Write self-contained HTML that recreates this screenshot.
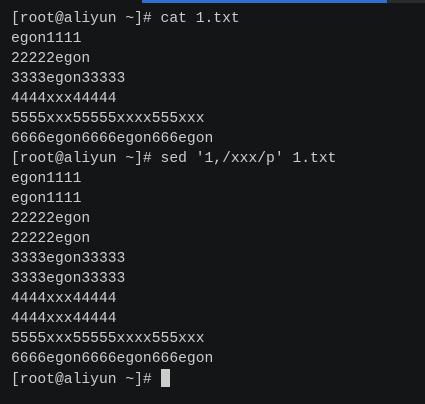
<!DOCTYPE html><html><head><style>
html,body{margin:0;padding:0;}
body{width:425px;height:404px;background:#141516;overflow:hidden;position:relative;}
.bar{position:absolute;top:0;height:3px;}
pre{position:absolute;left:11px;top:9px;margin:0;font-family:"Liberation Mono",monospace;font-size:14.67px;line-height:20px;color:#cccccc;}
.cur{display:inline-block;width:9px;height:18px;background:#cccccc;vertical-align:-4px;}
</style></head><body>
<div class="bar" style="left:142px;width:245px;background:#2f6fd0"></div>
<div class="bar" style="left:387px;width:38px;background:#2a2b2c"></div>
<pre>[root@aliyun ~]# cat 1.txt
egon1111
22222egon
3333egon33333
4444xxx44444
5555xxx55555xxxx555xxx
6666egon6666egon666egon
[root@aliyun ~]# sed '1,/xxx/p' 1.txt
egon1111
egon1111
22222egon
22222egon
3333egon33333
3333egon33333
4444xxx44444
4444xxx44444
5555xxx55555xxxx555xxx
6666egon6666egon666egon
[root@aliyun ~]# <span class="cur"></span></pre>
</body></html>
